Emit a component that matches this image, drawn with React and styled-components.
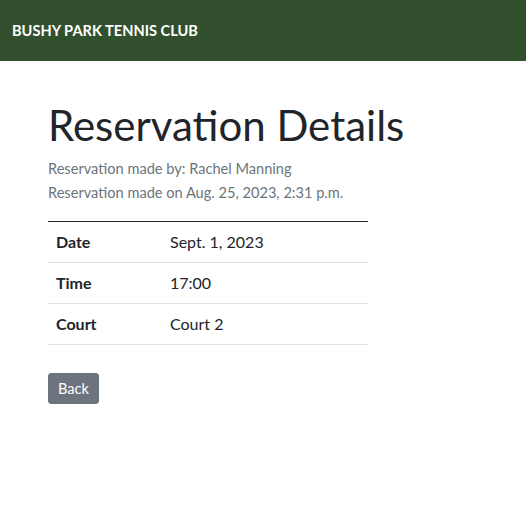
import React from 'react'
import styled, { createGlobalStyle } from 'styled-components'

const GlobalStyle = createGlobalStyle`
  body {
    margin: 0;
    font-family: Lato, 'Open Sans', sans-serif;
    font-size: 16px;
    line-height: 1.5;
    color: #212529;
    background: #fff;
  }
`

const S = {}

S.Nav = styled.nav`
  display: flex;
  align-items: center;
  height: 61px;
  padding: 0 12px;
  background-color: #33502e;
`

S.Brand = styled.a`
  color: #fff;
  font-weight: 700;
  font-size: 14.6px;
  text-decoration: none;
  text-transform: uppercase;
`

S.Main = styled.main`
  padding: 40px 48px 0 48px;
`

S.Title = styled.h1`
  margin: 0 0 8px 0;
  font-size: 42px;
  font-weight: 400;
  line-height: 48px;
`

S.Meta = styled.p`
  margin: 0;
  color: #6c757d;
  font-size: 14.6px;
  line-height: 24px;
`

S.Table = styled.table`
  width: 320px;
  margin: 16px 0 28px 0;
  border-collapse: collapse;
  border-top: 1px solid #212529;
`

S.Row = styled.tr`
  border-bottom: 1px solid #dee2e6;
`

S.Label = styled.th`
  width: 98px;
  padding: 8px;
  text-align: left;
  font-weight: 700;
`

S.Value = styled.td`
  padding: 8px;
`

S.Button = styled.button`
  font-family: inherit;
  font-size: 14.5px;
  line-height: 21px;
  padding: 4px 9px;
  color: #fff;
  background-color: #6c757d;
  border: 1px solid #6c757d;
  border-radius: 3px;
  cursor: pointer;
`

const details = [
  ['Date', 'Sept. 1, 2023'],
  ['Time', '17:00'],
  ['Court', 'Court 2']
]

const App = () => (
  <>
    <GlobalStyle />
    <S.Nav>
      <S.Brand href='#'>Bushy Park Tennis Club</S.Brand>
    </S.Nav>
    <S.Main>
      <S.Title>Reservation Details</S.Title>
      <S.Meta>Reservation made by: Rachel Manning</S.Meta>
      <S.Meta>Reservation made on Aug. 25, 2023, 2:31 p.m.</S.Meta>
      <S.Table>
        <tbody>
          {details.map(([label, value]) => (
            <S.Row key={label}>
              <S.Label>{label}</S.Label>
              <S.Value>{value}</S.Value>
            </S.Row>
          ))}
        </tbody>
      </S.Table>
      <S.Button type='button'>Back</S.Button>
    </S.Main>
  </>
)

export default App
